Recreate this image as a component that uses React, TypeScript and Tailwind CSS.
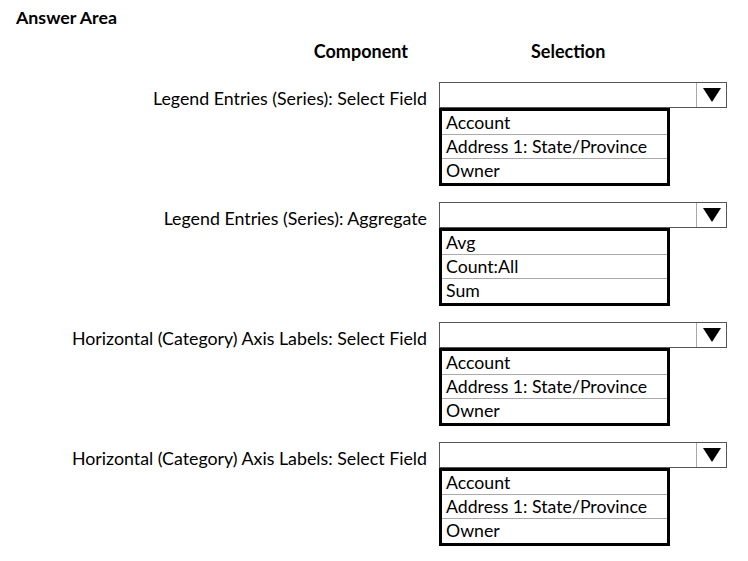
const ROWS = [
  { label: "Legend Entries (Series): Select Field", options: ["Account", "Address 1: State/Province", "Owner"] },
  { label: "Legend Entries (Series): Aggregate", options: ["Avg", "Count:All", "Sum"] },
  { label: "Horizontal (Category) Axis Labels: Select Field", options: ["Account", "Address 1: State/Province", "Owner"] },
  { label: "Horizontal (Category) Axis Labels: Select Field", options: ["Account", "Address 1: State/Province", "Owner"] },
];

function Dropdown({ options }: { options: string[] }) {
  return (
    <div className="flex flex-col">
      <div className="flex h-[26px] w-[288px] border border-[#555] bg-white">
        <div className="flex-1" />
        <div className="flex w-[30px] items-center justify-center border-l border-[#aaa]">
          <svg width="20" height="16" viewBox="0 0 20 16">
            <polygon points="1,1 19,1 10,15" fill="#000" />
          </svg>
        </div>
      </div>
      <ul className="w-[231px] border-[3px] border-black">
        {options.map((o, i) => (
          <li
            key={o}
            className={
              "h-[24px] pl-[4px] text-[17.7px] leading-[23px] text-black " +
              (i < options.length - 1 ? "border-b border-[#aaa]" : "")
            }
          >
            {o}
          </li>
        ))}
      </ul>
    </div>
  );
}

export default function App() {
  return (
    <div className="h-[561px] w-[748px] bg-white font-['Lato','Noto_Sans',sans-serif] text-black">
      <div className="pl-[16px] pt-[5px] text-[17.8px] leading-[24px] font-bold">Answer Area</div>
      <div className="mt-[10px] flex text-[18px] leading-[24px] font-bold">
        <div className="w-[408px] text-right">Component</div>
        <div className="ml-[123px]">Selection</div>
      </div>
      <div className="mt-[19px] flex flex-col gap-[16px]">
        {ROWS.map((r, i) => (
          <div key={i} className="flex items-start">
            <div className="w-[427px] pt-[3px] text-right text-[17.8px] leading-[26px]">{r.label}</div>
            <div className="ml-[12px]">
              <Dropdown options={r.options} />
            </div>
          </div>
        ))}
      </div>
    </div>
  );
}
